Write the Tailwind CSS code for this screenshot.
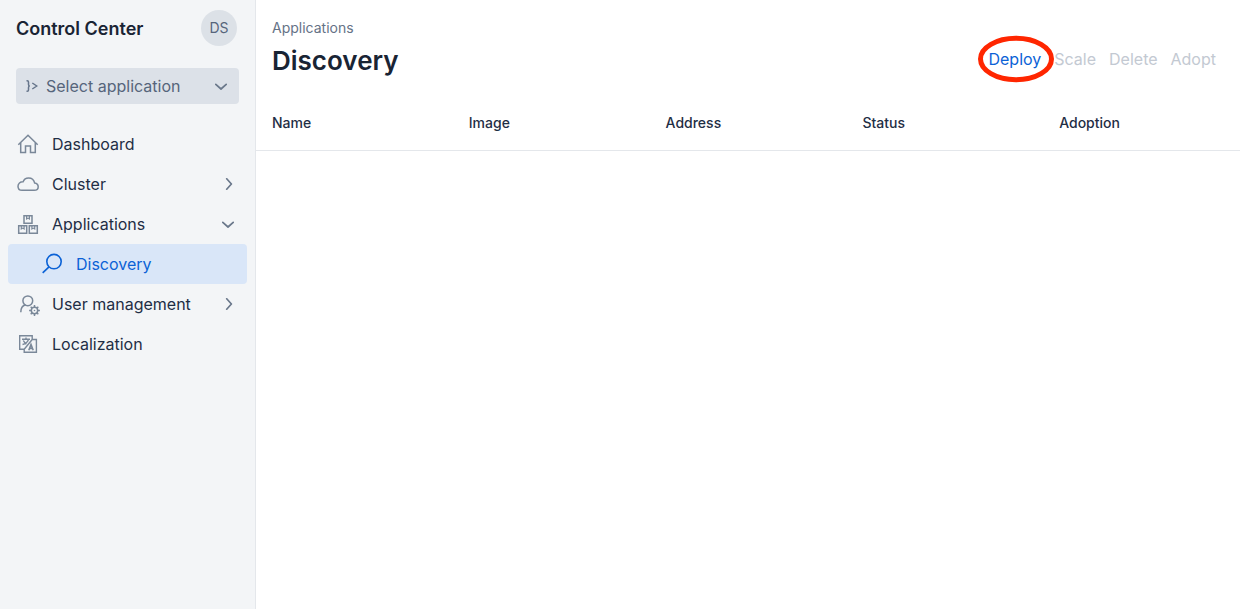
<!DOCTYPE html>
<html lang="en">
<head>
<meta charset="utf-8">
<meta name="viewport" content="width=device-width, initial-scale=1">
<title>Control Center</title>
<script src="https://cdn.jsdelivr.net/npm/@tailwindcss/browser@4"></script>
</head>
<body class="flex min-h-screen bg-white font-['Inter',sans-serif] text-base text-[#1f2e45] antialiased">
<aside class="w-64 shrink-0 border-r border-[#e4e7eb] bg-[#f3f5f7]">
  <header class="flex h-14 items-center justify-between pr-[18px] pl-4">
    <h2 class="pt-0.5 text-lg font-semibold text-[#192434]">Control Center</h2>
    <button type="button" aria-label="User menu" class="size-9 rounded-full bg-[#dce1e7] text-sm text-[#56657b]">DS</button>
  </header>
  <div class="relative mx-4 mt-3">
    <select aria-label="Select application" class="h-9 w-full appearance-none rounded-sm bg-[#dce1e8] pr-8 pl-[30px] text-[#56657b]">
      <option>Select application</option>
    </select>
    <svg class="pointer-events-none absolute top-3 left-2.5 h-3 w-3" viewBox="0 0 12 12" fill="none" stroke="#65748a" stroke-width="1.5"><path d="M.5.8h.7q1.300 0 1.300 1.300v2.400q0 1.500 1.300 1.500q-1.300 0-1.300 1.500v2.400q0 1.300-1.300 1.300H.5M6.300 3l4.500 3-4.500 3"/></svg>
    <svg class="pointer-events-none absolute top-3 right-3 h-3 w-3" viewBox="0 0 12 12" fill="none" stroke="#6a788b" stroke-width="1.700" stroke-linecap="round" stroke-linejoin="round"><path d="M.8 4.300 6 9l5.200-4.700"/></svg>
  </div>
  <nav aria-label="Main" class="mx-2 mt-5 flex flex-col">
    <a href="#" class="flex h-10 items-center gap-3 px-2">
      <svg class="size-6" viewBox="0 0 24 24" fill="none" stroke="#7a8899" stroke-width="1.500"><path d="m2.300 12.800 9.700-9.500 9.700 9.500M4.700 10.500v10h4.800v-6.500h5v6.500h4.800v-10"/></svg>
      Dashboard
    </a>
    <a href="#" class="flex h-10 items-center gap-3 px-2">
      <svg class="size-6" viewBox="0 0 24 24" fill="none" stroke="#7a8899" stroke-width="1.500"><path d="M6 18.300h12.200c2.300 0 4-1.500 4-3.600 0-2-1.500-3.500-3.600-3.800C18 8 15.700 5.900 12.600 5.900c-2.700 0-4.700 1.500-5.500 3.900C4.200 9.700 2 11.500 2 14.200c0 2.500 1.700 4.100 4 4.100Z"/></svg>
      <span class="flex-1">Cluster</span>
      <svg class="mr-[5px] size-3" viewBox="0 0 12 12" fill="none" stroke="#6a788b" stroke-width="1.700" stroke-linecap="round" stroke-linejoin="round"><path d="M4.700.8 9.400 6l-4.700 5.200"/></svg>
    </a>
    <a href="#" class="flex h-10 items-center gap-3 px-2">
      <svg class="size-6" viewBox="0 0 24 24" fill="none" stroke="#7a8899" stroke-width="1.500"><path d="M8 3.700h8v7.600H8zM2.700 13.700h8v7.600h-8zM13.300 13.700h8v7.600h-8z"/><path d="M10.600 4v3l1.400-.9 1.400.9V4M5.300 14v3l1.400-.9 1.400.9v-3M15.900 14v3l1.400-.9 1.400.9v-3" stroke-width="1.200"/></svg>
      <span class="flex-1">Applications</span>
      <svg class="mr-[5px] size-3" viewBox="0 0 12 12" fill="none" stroke="#6a788b" stroke-width="1.700" stroke-linecap="round" stroke-linejoin="round"><path d="M.8 4.300 6 9l5.200-4.700"/></svg>
    </a>
    <a href="#" aria-current="page" class="flex h-10 items-center gap-3 rounded bg-[#d9e6f8] pr-2 pl-8 text-[#0b62d6]">
      <svg class="size-6" viewBox="0 0 24 24" fill="none" stroke="#0b62d6" stroke-width="1.600"><circle cx="14" cy="9.600" r="7.200"/><path d="m9 14.800-6.300 6"/></svg>
      Discovery
    </a>
    <a href="#" class="flex h-10 items-center gap-3 px-2">
      <svg class="size-6" viewBox="0 0 24 24" fill="none" stroke="#7a8899" stroke-width="1.500"><circle cx="11.800" cy="8.800" r="4.900"/><path d="M4.800 20.200c0-4 1.800-6.500 4.700-7.400"/><circle cx="18.500" cy="18.500" r="3.200"/><circle cx="18.500" cy="18.500" r=".8" fill="#7a8899" stroke="none"/><path d="M18.500 13.100v2.200m0 6.400v2.200m5.400-5.400h-2.200m-6.400 0h-2.200m9.200-3.800-1.500 1.500m-4.600 4.600-1.500 1.500m7.600 0-1.500-1.500m-4.600-4.600-1.500-1.500"/></svg>
      <span class="flex-1">User management</span>
      <svg class="mr-[5px] size-3" viewBox="0 0 12 12" fill="none" stroke="#6a788b" stroke-width="1.700" stroke-linecap="round" stroke-linejoin="round"><path d="M4.700.8 9.400 6l-4.700 5.200"/></svg>
    </a>
    <a href="#" class="flex h-10 items-center gap-3 px-2">
      <svg class="size-6" viewBox="0 0 24 24" fill="none" stroke="#7a8899" stroke-width="1.400"><path d="M16.200 7.500V3.700H3.700v13.600h4.500M16.200 7.500h4.200v12.800H8.200v-3M16.200 7.500l-8 9.800"/><path d="M6 7.200h8M10 5.600v1.600M12.500 7.500q-1.500 4-6 5M7.300 8.500q1.200 2.500 3.200 3.300"/><path d="m12.800 18.200 2.200-5.700 2.200 5.700M13.700 16.400h2.700" stroke-width="1.600"/></svg>
      Localization
    </a>
  </nav>
</aside>
<main class="min-w-0 flex-1">
  <header class="flex h-24 items-start justify-between pt-[18px] pr-6 pl-4">
    <div>
      <p class="text-sm leading-5 text-[#657286]">Applications</p>
      <h1 class="mt-1 text-[26px] leading-[38px] font-semibold text-[#192434]">Discovery</h1>
    </div>
    <div class="mt-[29px] flex gap-[13px] leading-6 text-[#c3c9d2]">
      <button type="button" class="relative text-[#0b62d6]">Deploy
        <svg class="pointer-events-none absolute top-1/2 left-1/2 h-12 w-20 max-w-none -translate-x-1/2 -translate-y-1/2" viewBox="0 0 80 48" fill="none" stroke="#ff2600" stroke-width="5"><ellipse cx="41" cy="24" rx="35.500" ry="20.700"/></svg>
      </button>
      <button type="button" disabled>Scale</button>
      <button type="button" disabled>Delete</button>
      <button type="button" disabled>Adopt</button>
    </div>
  </header>
  <table class="w-full table-fixed text-left text-sm">
    <thead>
      <tr class="h-[54px] border-b border-[#e4e7eb]">
        <th scope="col" class="px-4 font-medium">Name</th>
        <th scope="col" class="px-4 font-medium">Image</th>
        <th scope="col" class="px-4 font-medium">Address</th>
        <th scope="col" class="px-4 font-medium">Status</th>
        <th scope="col" class="px-4 font-medium">Adoption</th>
      </tr>
    </thead>
  </table>
</main>
</body>
</html>
